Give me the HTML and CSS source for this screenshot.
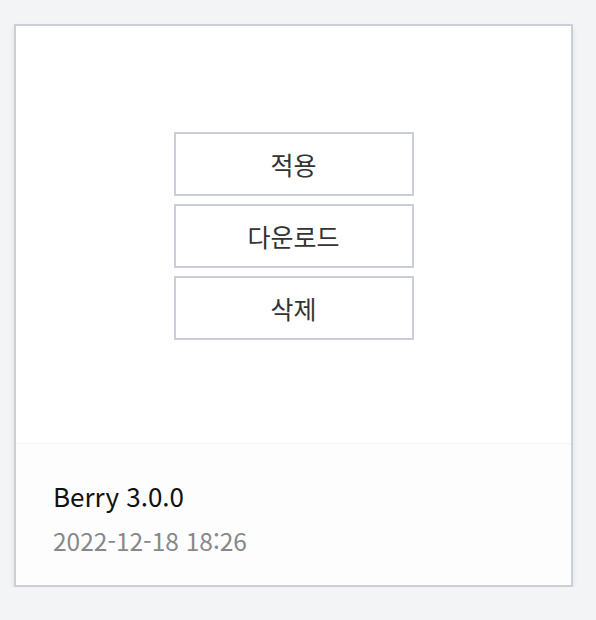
FILE: index.html
```html
<!DOCTYPE html>
<html lang="ko">
<head>
<meta charset="UTF-8">
<title>Theme</title>
<link rel="stylesheet" href="styles.css">
</head>
<body>

<div class="theme-card">
  <div class="preview">
    <div class="actions">
      <button type="button" class="action">적용</button>
      <button type="button" class="action">다운로드</button>
      <button type="button" class="action">삭제</button>
    </div>
  </div>
  <div class="info">
    <div class="name">Berry 3.0.0</div>
    <div class="date">2022-12-18 18:26</div>
  </div>
</div>

</body>
</html>
```

FILE: styles.css
```css
* {
  box-sizing: border-box;
  font-family: 'Noto Sans CJK KR', 'Noto Sans', sans-serif;
}

body {
  margin: 0;
  padding: 24px 23px 0 14px;
  background: #f3f4f6;
}

.theme-card {
  width: 559px;
  height: 563px;
  background: #fff;
  border: 2px solid #c9ced9;
  box-shadow: 0 3px 6px rgba(0, 0, 0, 0.08);
  display: flex;
  flex-direction: column;
}

.preview {
  height: 418px;
  display: flex;
  justify-content: center;
  align-items: center;
  border-bottom: 1px solid #f3f3f3;
}

.actions {
  display: flex;
  flex-direction: column;
  gap: 8px;
  padding-top: 2px;
}

.action {
  width: 240px;
  height: 64px;
  background: #fff;
  border: 2px solid #c9ced9;
  font-size: 25px;
  color: #333;
  cursor: pointer;
  padding: 0;
}

.info {
  flex-grow: 1;
  background: #fdfdfd;
  padding: 34px 0 0 37px;
}

.name {
  font-size: 26px;
  color: #111;
  line-height: 36px;
}

.date {
  font-size: 24.5px;
  color: #888;
  line-height: 34px;
  margin-top: 10px;
}
```
